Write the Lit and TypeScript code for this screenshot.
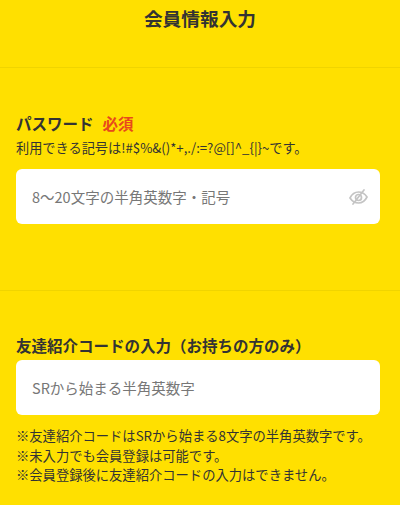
import { LitElement, html, css } from "lit";
import { customElement } from "lit/decorators.js";

@customElement("app-root")
export class AppRoot extends LitElement {
  static styles = css`
    :host {
      display: block;
      width: 400px;
      height: 505px;
      overflow: hidden;
      background: #ffe000;
      color: #333;
      font-family: "Noto Sans CJK JP", "Noto Sans", sans-serif;
    }
    .header {
      height: 68px;
      box-sizing: border-box;
      border-bottom: 1px solid #f0d400;
      text-align: center;
      font-size: 18.7px;
      font-weight: 700;
      line-height: 35px;
    }
    .section {
      padding: 0 20px 0 16px;
    }
    .password {
      height: 223px;
      box-sizing: border-box;
      padding-top: 43px;
      border-bottom: 1px solid #f0d400;
    }
    .friend {
      padding-top: 42px;
    }
    .label {
      font-size: 15.5px;
      font-weight: 700;
      line-height: 24px;
      display: flex;
      gap: 9px;
    }
    .req {
      color: #e8481c;
    }
    .note {
      font-size: 13.2px;
      line-height: 20px;
      margin-top: 3px;
      white-space: nowrap;
    }
    .field {
      height: 55px;
      margin-top: 11px;
      background: #fff;
      border-radius: 6px;
      padding: 0 12px 0 16px;
      display: flex;
      align-items: center;
      justify-content: space-between;
      font-size: 14.5px;
      color: #777;
    }
    .friend .field {
      margin-top: 3px;
    }
    .eye {
      width: 19px;
      height: 18px;
      display: block;
    }
    .notes {
      margin-top: 11px;
      font-size: 13.3px;
      line-height: 19.5px;
      white-space: nowrap;
    }
  `;

  render() {
    return html`
      <div class="header">会員情報入力</div>
      <div class="section password">
        <div class="label">パスワード <span class="req">必須</span></div>
        <div class="note">利用できる記号は!#$%&()*+,./:=?@[]^_{|}~です。</div>
        <div class="field">
          <span>8〜20文字の半角英数字・記号</span>
          <svg class="eye" viewBox="0 0 19 18" fill="none" stroke="#c4c4c4" stroke-width="1.7" stroke-linecap="round">
            <path d="M1 10c2-4 5-6 8.500-6s6.500 2 8.500 5c-2 4-5 6-8.500 6S3 13 1 10z" />
            <circle cx="9.500" cy="9.500" r="3" />
            <path d="M15 2 4 16" />
          </svg>
        </div>
      </div>
      <div class="section friend">
        <div class="label">友達紹介コードの入力（お持ちの方のみ）</div>
        <div class="field"><span>SRから始まる半角英数字</span></div>
        <div class="notes">
          <div>※友達紹介コードはSRから始まる8文字の半角英数字です。</div>
          <div>※未入力でも会員登録は可能です。</div>
          <div>※会員登録後に友達紹介コードの入力はできません。</div>
        </div>
      </div>
    `;
  }
}
